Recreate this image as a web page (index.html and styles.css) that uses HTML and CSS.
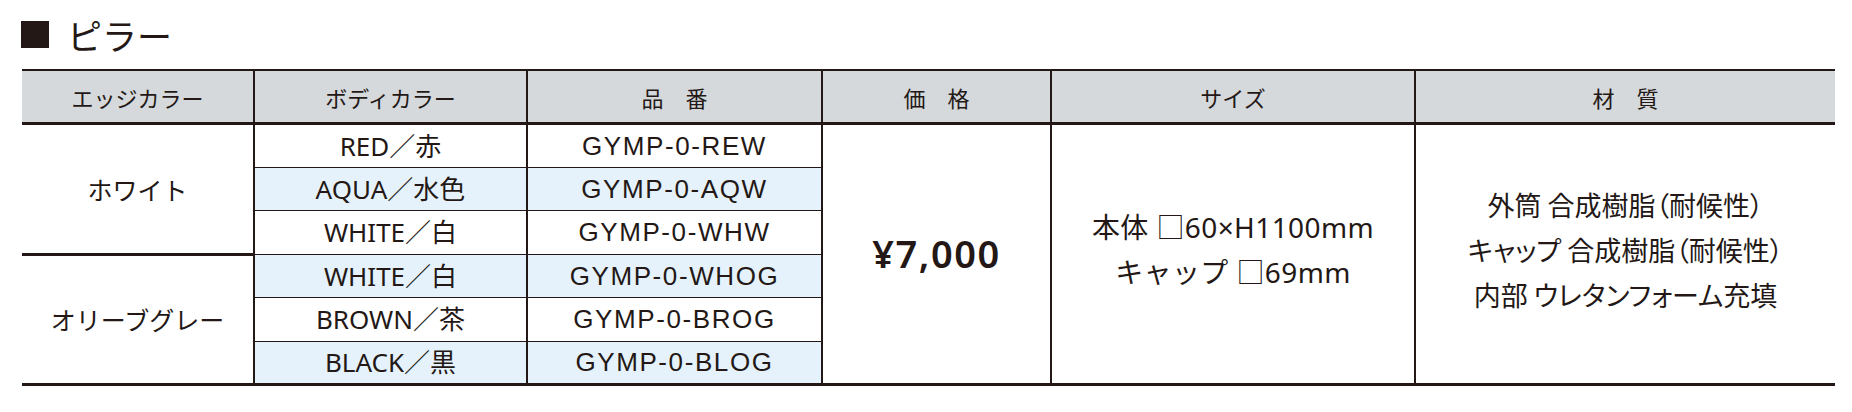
FILE: index.html
```html
<!DOCTYPE html>
<html lang="ja">
<head>
<meta charset="utf-8">
<title>ピラー</title>
<link rel="stylesheet" href="styles.css">
</head>
<body>
<h1 class="title"><span class="mark"></span><span class="title-text">ピラー</span></h1>
<table class="spec">
  <colgroup>
    <col class="c-edge"><col class="c-body"><col class="c-code"><col class="c-price"><col class="c-size"><col class="c-mat">
  </colgroup>
  <thead>
    <tr>
      <th>エッジカラー</th>
      <th>ボディカラー</th>
      <th>品　番</th>
      <th>価　格</th>
      <th>サイズ</th>
      <th>材　質</th>
    </tr>
  </thead>
  <tbody>
    <tr>
      <td class="edge" rowspan="3">ホワイト</td>
      <td class="bc">RED／赤</td>
      <td class="code">GYMP-0-REW</td>
      <td class="price" rowspan="6">¥7,000</td>
      <td class="size" rowspan="6">本体 □60×H1100mm<br>キャップ □69mm</td>
      <td class="mat" rowspan="6">外筒 合成樹脂（耐候性）<br>キャップ 合成樹脂（耐候性）<br>内部 ウレタンフォーム充填</td>
    </tr>
    <tr class="blue">
      <td class="bc">AQUA／水色</td>
      <td class="code">GYMP-0-AQW</td>
    </tr>
    <tr>
      <td class="bc">WHITE／白</td>
      <td class="code">GYMP-0-WHW</td>
    </tr>
    <tr class="blue">
      <td class="edge group" rowspan="3">オリーブグレー</td>
      <td class="bc">WHITE／白</td>
      <td class="code">GYMP-0-WHOG</td>
    </tr>
    <tr>
      <td class="bc">BROWN／茶</td>
      <td class="code">GYMP-0-BROG</td>
    </tr>
    <tr class="blue last">
      <td class="bc">BLACK／黒</td>
      <td class="code">GYMP-0-BLOG</td>
    </tr>
  </tbody>
</table>
</body>
</html>
```
FILE: styles.css
```css
html, body {
  margin: 0;
  padding: 0;
  background: #ffffff;
}
body {
  width: 1852px;
  height: 412px;
  overflow: hidden;
  color: #231815;
  font-family: "Noto Sans CJK JP", "Noto Sans", sans-serif;
}
.title {
  margin: 0;
  padding: 17px 0 0 21px;
  height: 52px;
  box-sizing: border-box;
  display: flex;
  align-items: center;
  font-weight: 400;
  font-size: 35px;
  line-height: 35px;
}
.mark {
  display: inline-block;
  width: 28px;
  height: 27px;
  background: #231815;
  margin-right: 18px;
}
.spec {
  margin: 17px 0 0 22px;
  width: 1813px;
  border-collapse: collapse;
  table-layout: fixed;
  border-top: 2px solid #231815;
  border-bottom: 3px solid #231815;
}
.c-edge { width: 232px; }
.c-body { width: 273px; }
.c-code { width: 295px; }
.c-price { width: 229px; }
.c-size { width: 364px; }
.c-mat { width: 420px; }
.spec th {
  background: #d5d9dc;
  height: 51px;
  padding: 0;
  font-weight: 400;
  font-size: 22px;
  text-align: center;
  vertical-align: middle;
  border-bottom: 3px solid #231815;
  border-left: 2px solid #231815;
}
.spec th:first-child { border-left: none; }
.spec td {
  padding: 0;
  text-align: center;
  vertical-align: middle;
  border-left: 2px solid #231815;
  font-size: 26px;
}
.spec tbody tr { height: 43.5px; }
.spec td.edge { border-left: none; font-size: 25px; }
.spec td.group { border-top: 3px solid #231815; }
.spec td.bc,
.spec td.code {
  border-bottom: 1.5px solid #231815;
  line-height: 30px;
}
.spec td.bc {
  font-family: "Noto Sans", "Noto Sans CJK JP", sans-serif;
}
.spec tr.last td.bc,
.spec tr.last td.code { border-bottom: none; }
.spec tr.blue td.bc,
.spec tr.blue td.code { background: #e5f2fb; }
.spec td.code {
  font-family: "Liberation Sans", "Noto Sans CJK JP", sans-serif;
  letter-spacing: 1.6px;
}
.spec td.price {
  font-family: "Noto Sans", "Liberation Sans", sans-serif;
  font-weight: 600;
  font-size: 38px;
  letter-spacing: 1.5px;
  padding-bottom: 2px;
}
.spec td.size {
  font-family: "Noto Sans", "Noto Sans CJK JP", sans-serif;
  font-size: 28px;
  letter-spacing: 0.4px;
  line-height: 45px;
  padding-bottom: 8px;
}
.spec td.mat {
  font-size: 27px;
  line-height: 45px;
  font-feature-settings: "palt";
  padding-bottom: 9px;
}
```
